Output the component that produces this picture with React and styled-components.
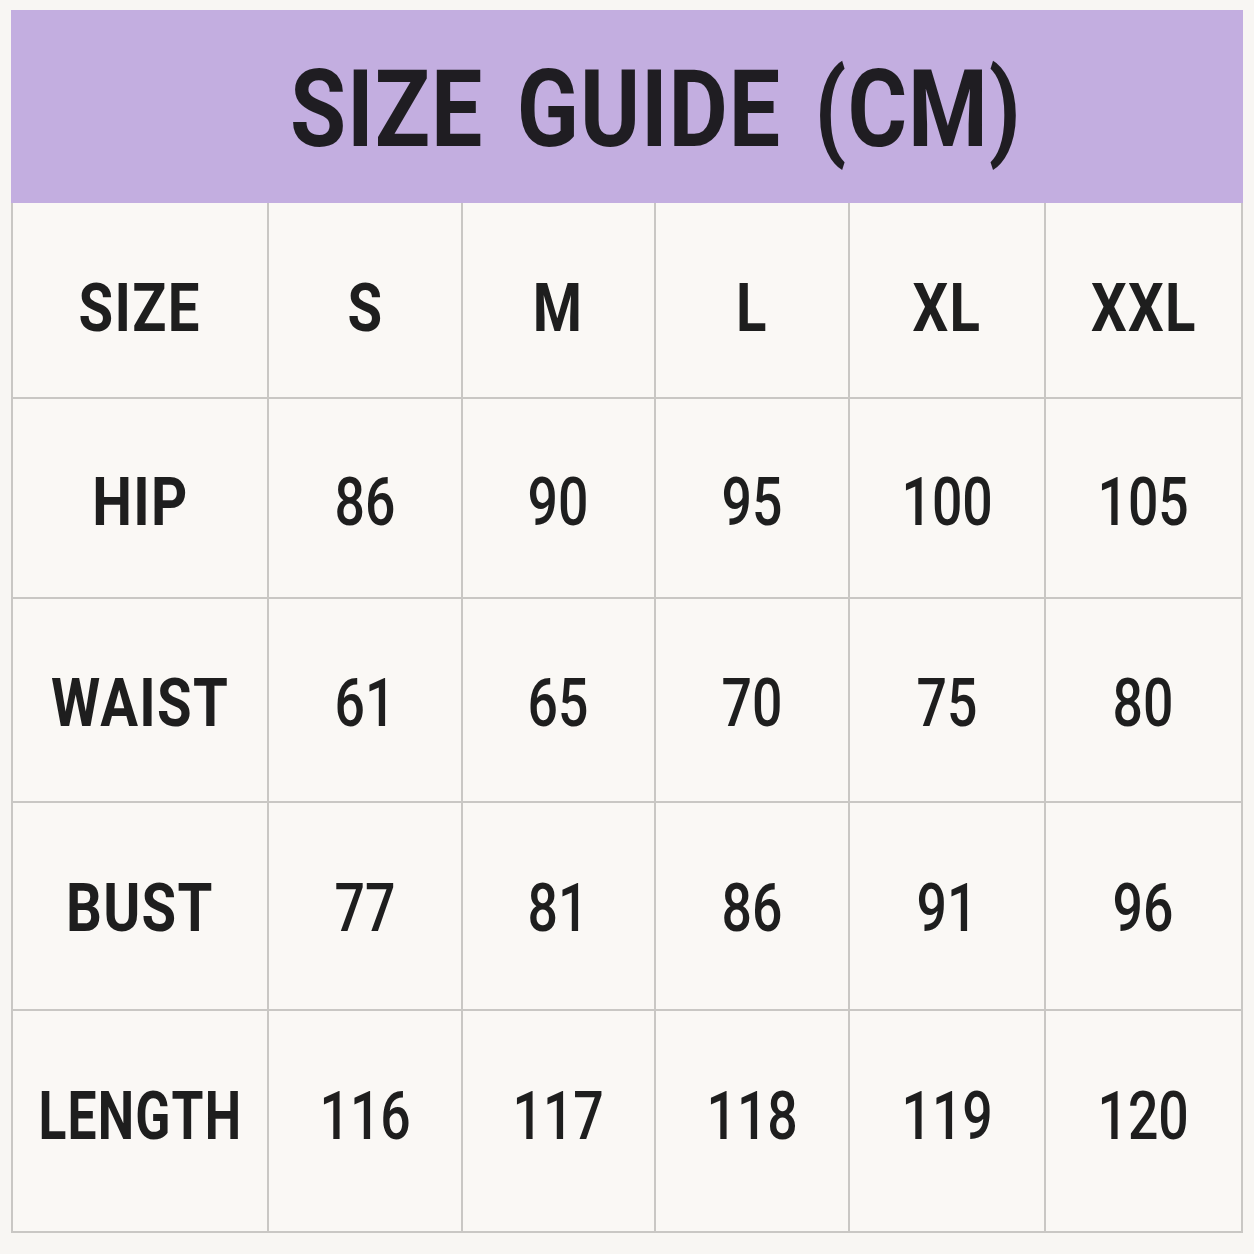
import { Fragment } from "react";
import styled, { createGlobalStyle } from "styled-components";

const GlobalStyle = createGlobalStyle`
  html, body {
    margin: 0;
    padding: 0;
    background: #f8f6f3;
  }
  body {
    font-family: Roboto, "Liberation Sans", sans-serif;
    color: #1e1e1e;
  }
`;

const sizes = ["S", "M", "L", "XL", "XXL"];

// nudge: how far the text sits below the middle of its row
const rows = [
  { label: "HIP", nudge: 4, values: [86, 90, 95, 100, 105] },
  { label: "WAIST", nudge: 3, values: [61, 65, 70, 75, 80] },
  { label: "BUST", nudge: 2, values: [77, 81, 86, 91, 96] },
  { label: "LENGTH", nudge: -5, values: [116, 117, 118, 119, 120] },
];

function App() {
  return (
    <>
      <GlobalStyle />
      <Page>
        <Chart>
          <Banner>
            <Title>SIZE GUIDE (CM)</Title>
          </Banner>
          <Table>
            <Cell $nudge={8}>
              <Label>SIZE</Label>
            </Cell>
            {sizes.map((s) => (
              <Cell key={s} $nudge={8}>
                <Label>{s}</Label>
              </Cell>
            ))}
            {rows.map((row) => (
              <Fragment key={row.label}>
                <Cell $nudge={row.nudge}>
                  <Label $squeeze={row.label.length > 5}>{row.label}</Label>
                </Cell>
                {row.values.map((v, i) => (
                  <Cell key={i} $nudge={row.nudge}>
                    <Value>{v}</Value>
                  </Cell>
                ))}
              </Fragment>
            ))}
          </Table>
        </Chart>
      </Page>
    </>
  );
}

export default App;

const Page = styled.div`
  width: 1254px;
  height: 1254px;
  padding: 10px 11px;
  box-sizing: border-box;
`;

const Chart = styled.div`
  display: flex;
  flex-direction: column;
  width: 1232px;
`;

const Banner = styled.div`
  display: flex;
  align-items: center;
  justify-content: center;
  height: 193px;
  padding-left: 58px;
  box-sizing: border-box;
  background: #c3aee0;
`;

const Title = styled.h1`
  margin: 0;
  font-size: 107px;
  font-weight: 700;
  line-height: 1;
  letter-spacing: 1px;
  word-spacing: 12px;
  color: #1f1d22;
  transform: translateY(3px) scaleX(0.853);
  white-space: nowrap;
`;

const Table = styled.div`
  display: grid;
  grid-template-columns: 256px 194px 193px 194px 196px 197px;
  grid-template-rows: 196px 200px 204px 208px 222px;
  border-left: 2px solid #c9c7c4;
  background: #faf8f5;
`;

const Cell = styled.div`
  display: flex;
  align-items: center;
  justify-content: center;
  box-sizing: border-box;
  padding-top: ${(p) => Math.max(p.$nudge * 2, 0)}px;
  padding-bottom: ${(p) => Math.max(-p.$nudge * 2, 0)}px;
  border-right: 2px solid #c9c7c4;
  border-bottom: 2px solid #c9c7c4;
  color: #1e1e1e;
`;

const Label = styled.span`
  display: inline-block;
  font-size: 67px;
  line-height: 1;
  font-weight: 700;
  letter-spacing: 1.5px;
  white-space: nowrap;
  transform: scaleX(${(p) => (p.$squeeze ? 0.77 : 0.84)});
`;

const Value = styled.span`
  display: inline-block;
  font-size: 67px;
  line-height: 1;
  font-weight: 500;
  white-space: nowrap;
  transform: scaleX(0.8);
`;
